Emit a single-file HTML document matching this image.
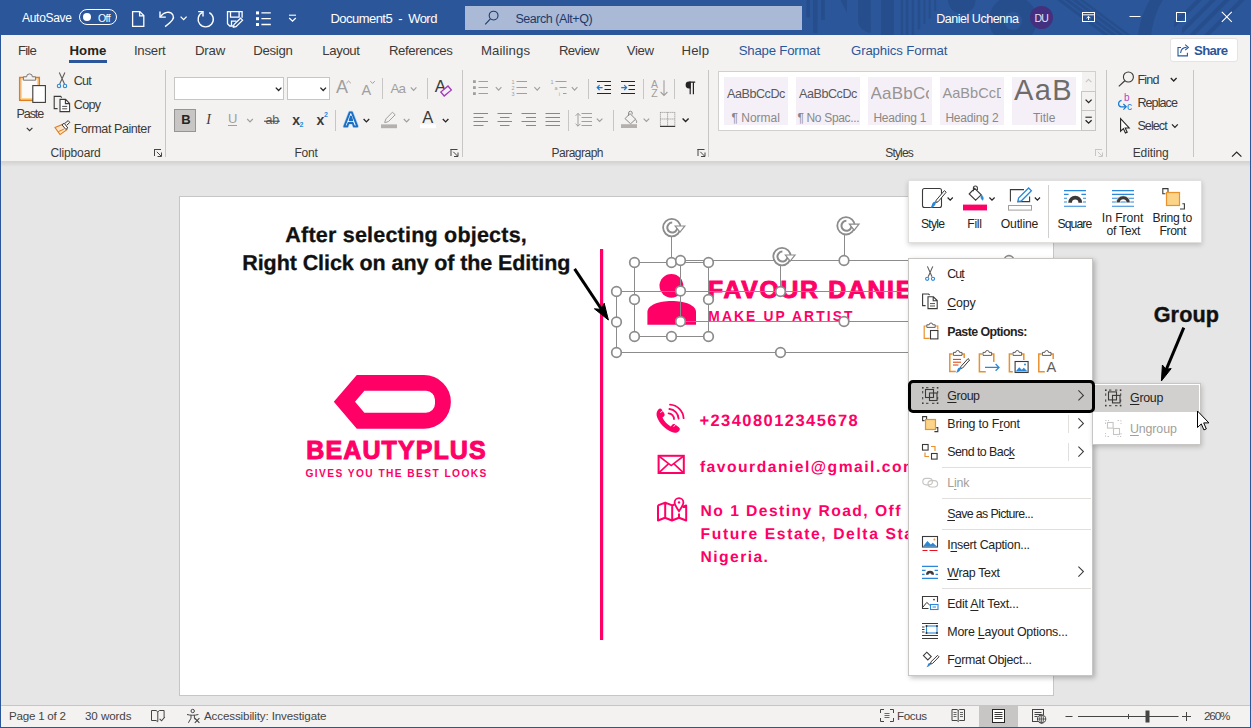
<!DOCTYPE html>
<html><head><meta charset="utf-8"><title>Word</title>
<style>
html,body{margin:0;padding:0;}
body{width:1251px;height:728px;overflow:hidden;position:relative;background:#e6e6e6;font-family:"Liberation Sans",sans-serif;}
.a{position:absolute;}
.t{position:absolute;white-space:nowrap;line-height:24px;height:24px;}
svg{position:absolute;left:0;top:0;overflow:visible;}
.sep{position:absolute;width:1px;background:#c8c6c4;}
.msep{position:absolute;height:1px;background:#e1dfdd;left:942px;width:149px;}
</style></head><body>

<div class="a" id="titlebar" style="left:0;top:0;width:1251px;height:35px;background:#2b579a;"></div>
<svg width="1251" height="35" viewBox="0 0 1251 35">
 <g fill="#264e8c">
  <rect x="806.400" y="0" width="3.600" height="17.500"/><rect x="813" y="0" width="4.600" height="33"/><rect x="821" y="0" width="3.800" height="20"/>
  <path d="M840.400 0 h6.500 v13z"/>
  <path d="M858 0 h12.800 v33 c-7 -1 -12.800 -6 -12.800 -12z"/>
  <rect x="881" y="0" width="12.800" height="35"/>
  <rect x="900.700" y="0" width="2.400" height="35"/><rect x="905.700" y="0" width="2.800" height="35"/><rect x="911.600" y="0" width="2.500" height="35"/>
  <rect x="917.600" y="0" width="2.800" height="29.500"/><rect x="923.500" y="0" width="2" height="24"/><rect x="928.700" y="0" width="2" height="18.500"/><rect x="934.200" y="0" width="2" height="11"/>
  <path d="M948 0 h27.600 a13.800 13.800 0 0 1 -27.600 0z"/>
  <path fill-rule="evenodd" d="M989 20 a24 24 0 1 0 48 0 a24 24 0 1 0 -48 0z M1004 21 a9 9 0 1 0 18 0 a9 9 0 1 0 -18 0z"/>
  <path d="M1057 0 h5 l47 35 h-5z M1064.500 0 h5 l47 35 h-5z M1072 0 h5 l47 35 h-5z M1079.500 0 h4 l47 35 h-4z"/>
  <path d="M1138 35 c2 -14 6 -26 12 -35 h13 c-6 9 -10 21 -12 35z"/>
  <path d="M1174 22 l22 -22 h6 l-28 28z M1182 28 l28 -28 h6 l-34 34z M1190 34 l34 -34 h6 l-35 35 h-5z M1204 35 l35 -35 h6 l-35 35z"/>
 </g>
</svg>
<div class="a" style="left:465px;top:6px;width:337px;height:24px;background:#a9b9d6;"></div>
<span class="t" style="left:22px;top:6.2px;font-size:12px;color:#fff;letter-spacing:-0.292px;">AutoSave</span>
<div class="a" style="left:79px;top:9px;width:36px;height:14px;border:1px solid #fff;border-radius:8px;"></div>
<div class="a" style="left:83px;top:13px;width:8px;height:8px;border-radius:4px;background:#fff;"></div>
<span class="t" style="left:98px;top:5.9px;font-size:10.5px;color:#fff;letter-spacing:-0.556px;">Off</span><span class="t" style="left:330.5px;top:6.6px;font-size:13px;color:#fff;letter-spacing:-0.541px;">Document5&nbsp; -&nbsp; Word</span><span class="t" style="left:515.4px;top:6.5px;font-size:12.5px;color:#1e3a6b;letter-spacing:-0.447px;">Search (Alt+Q)</span><span class="t" style="left:936.3px;top:6.5px;font-size:12.5px;color:#fff;letter-spacing:-0.481px;">Daniel Uchenna</span>
<div class="a" style="left:1030px;top:6px;width:23px;height:23px;border-radius:12px;background:#44307e;"></div>
<span class="t" style="left:1034.5px;top:6.3px;font-size:10.5px;color:#e8e2f4;letter-spacing:-0.872px;">DU</span>
<svg width="1251" height="35" viewBox="0 0 1251 35" fill="none" stroke="#fff" stroke-width="1.3" stroke-linecap="butt">
 <!-- new doc -->
 <path d="M132.6 11.6 h7.2 l4 4 v10.8 h-11.2z M139.6 11.8 v4 h4"/>
 <!-- undo -->
 <path d="M160 11.5 v5.6 h5.8" stroke-width="1.400"/><path d="M160.3 16.8 c3.5 -5 10 -6.2 12.6 -1.8 c1.8 3.2 -0.5 5.8 -7.8 11.6" stroke-width="1.400"/>
 <path d="M180.6 16.6 l3 3 l3 -3" stroke-width="1.3"/>
 <!-- redo -->
 <path d="M202.5 12.4 a7.6 7.6 0 1 0 6.8 0.2" stroke-width="1.400"/><path d="M198.2 11.6 h4.8 v4.8" stroke-width="1.400"/>
 <!-- save/pen -->
 <path d="M236 26 h-6.2 l-2.3 -2.3 v-12 h14.6 v6"/><path d="M230.5 11.8 v5.4 h8.6 v-5.4"/><path d="M231.5 25.8 v-4.6 h5"/>
 <path d="M240.6 18.2 l2 2 l-6.6 6.4 l-2.6 0.6 l0.6 -2.6z" stroke-width="1.200" fill="#2b579a"/>
 <!-- bullets -->
 <g stroke="none" fill="#fff"><rect x="256" y="11.4" width="3" height="3"/><rect x="256" y="17.2" width="3" height="3"/><rect x="256" y="23" width="3" height="3"/></g>
 <path d="M261.4 12.9 h9.4 M261.4 18.7 h9.4 M261.4 24.5 h9.4" stroke-width="1.300"/>
 <!-- customise qat -->
 <path d="M289 15.2 h7" stroke-width="1.1"/><path d="M289.2 18 l3.3 3.2 l3.3 -3.2" stroke-width="1.3"/>
 <!-- ribbon display -->
 <rect x="1082.5" y="12.5" width="12" height="9" stroke-width="1"/><path d="M1082.5 14.8 h12 M1088.5 20 v-3.6 M1086.6 18.2 l1.9 -1.9 l1.9 1.9" stroke-width="1"/>
 <!-- min max close -->
 <path d="M1129.5 16.5 h11" stroke-width="1"/>
 <rect x="1176.5" y="12.5" width="9" height="9" stroke-width="1"/>
 <path d="M1221.8 11.8 l10 10 M1231.8 11.8 l-10 10" stroke-width="1.1"/>
</svg>
<svg width="1251" height="35" viewBox="0 0 1251 35" fill="none" stroke="#1e3a6b" stroke-width="1.1">
 <circle cx="493.6" cy="15.6" r="4.4"/><path d="M490.4 18.9 l-5.2 5.4"/>
</svg>

<div class="a" style="left:0;top:35px;width:1251px;height:126px;background:#f3f2f1;"></div>
<span class="t" style="left:18px;top:39.1px;font-size:13.2px;color:#3b3a39;letter-spacing:-0.817px;">File</span><span class="t" style="left:69.5px;top:39.1px;font-size:13.2px;color:#252423;font-weight:700;letter-spacing:0.053px;">Home</span>
<div class="a" style="left:69px;top:60px;width:38px;height:3px;background:#2b579a;"></div>
<span class="t" style="left:133.9px;top:39.1px;font-size:13.2px;color:#3b3a39;letter-spacing:-0.217px;">Insert</span><span class="t" style="left:194.9px;top:39.1px;font-size:13.2px;color:#3b3a39;letter-spacing:-0.127px;">Draw</span><span class="t" style="left:253.3px;top:39.1px;font-size:13.2px;color:#3b3a39;letter-spacing:-0.312px;">Design</span><span class="t" style="left:322.3px;top:39.1px;font-size:13.2px;color:#3b3a39;letter-spacing:-0.382px;">Layout</span><span class="t" style="left:389px;top:39.1px;font-size:13.2px;color:#3b3a39;letter-spacing:-0.406px;">References</span><span class="t" style="left:481px;top:39.1px;font-size:13.2px;color:#3b3a39;letter-spacing:0.089px;">Mailings</span><span class="t" style="left:558.9px;top:39.1px;font-size:13.2px;color:#3b3a39;letter-spacing:-0.570px;">Review</span><span class="t" style="left:626.7px;top:39.1px;font-size:13.2px;color:#3b3a39;letter-spacing:-0.353px;">View</span><span class="t" style="left:681.5px;top:39.1px;font-size:13.2px;color:#3b3a39;letter-spacing:0.125px;">Help</span><span class="t" style="left:738.7px;top:39.1px;font-size:13.2px;color:#2b579a;letter-spacing:-0.188px;">Shape Format</span><span class="t" style="left:851px;top:39.1px;font-size:13.2px;color:#2b579a;letter-spacing:-0.122px;">Graphics Format</span>
<div class="a" style="left:1170px;top:38px;width:68px;height:24px;background:#fff;border:1px solid #e6e4e2;border-radius:3px;box-sizing:border-box;"></div>
<span class="t" style="left:1194px;top:39px;font-size:13.2px;color:#2b579a;font-weight:700;letter-spacing:-0.664px;">Share</span>
<svg width="1251" height="70" viewBox="0 0 1251 70" fill="none" stroke="#2b579a" stroke-width="1.1">
 <path d="M1181 47.5 h-3 v8.4 h9.4 v-3.2"/><path d="M1180.6 53 c0.4 -3.6 2.6 -5.6 6 -5.6 M1185.2 44.6 l3.2 2.8 l-3.2 2.8"/>
</svg>

<div class="sep" style="left:165px;top:70px;height:87px;"></div>
<div class="sep" style="left:462px;top:70px;height:87px;"></div>
<div class="sep" style="left:708px;top:70px;height:87px;"></div>
<div class="sep" style="left:1106px;top:70px;height:87px;"></div>
<div class="sep" style="left:1193px;top:70px;height:87px;"></div>
<span class="t" style="left:16.5px;top:102.4px;font-size:12.6px;color:#3b3a39;letter-spacing:-1.130px;">Paste</span><span class="t" style="left:73.8px;top:69.3px;font-size:12.6px;color:#3b3a39;letter-spacing:-0.805px;">Cut</span><span class="t" style="left:73.8px;top:93.1px;font-size:12.6px;color:#3b3a39;letter-spacing:-0.735px;">Copy</span><span class="t" style="left:73.8px;top:117.1px;font-size:12.6px;color:#3b3a39;letter-spacing:-0.461px;">Format Painter</span><span class="t" style="left:50.5px;top:141.4px;font-size:12px;color:#3b3a39;letter-spacing:-0.147px;">Clipboard</span>
<svg width="1251" height="165" viewBox="0 0 1251 165" fill="none">
 <!-- paste -->
 <rect x="19.800" y="77.600" width="19.400" height="22.600" fill="#fbfaf9" stroke="#e27d1e" stroke-width="1.700"/><rect x="21.400" y="79.200" width="16.200" height="19.400" fill="none" stroke="#fcd88f" stroke-width="1.300"/>
 <path d="M23.4 80.2 v-3.4 h3.2 a2.9 2.9 0 0 1 5.8 0 h3.2 v3.4z" fill="#f3f2f1" stroke="#797775" stroke-width="1"/>
 <rect x="32.8" y="85.6" width="12.6" height="16.8" fill="#fff" stroke="#3b3a39" stroke-width="1.1"/>
 <path d="M26.8 127.8 l2.8 2.9 l2.8 -2.9" stroke="#3b3a39" stroke-width="1.2" fill="none"/>
 <!-- cut -->
 <path d="M59.3 72.6 l5.2 11.4 M64.9 72.6 l-5.2 11.4" stroke="#605e5c" stroke-width="1.1"/>
 <circle cx="59" cy="86" r="1.7" stroke="#2b88d8" stroke-width="1.1"/><circle cx="65" cy="86" r="1.7" stroke="#2b88d8" stroke-width="1.1"/>
 <!-- copy -->
 <path d="M57.6 108.6 h-3.4 v-12.2 h6.4 l1.2 1.2" stroke="#3b3a39" stroke-width="1.1"/>
 <path d="M60 99.4 h5.6 l4 4 v8.2 h-9.6z M65.4 99.6 v4 h4" stroke="#3b3a39" stroke-width="1.1" fill="#fff"/>
 <path d="M62.2 106.4 h5 M62.2 108.8 h5" stroke="#3b3a39" stroke-width="0.9"/>
 <!-- format painter -->
 <path d="M55 127.6 l8.6 -3.6 l3.4 5.6 l-7 5z" fill="#fbe3c5" stroke="#e07a1c" stroke-width="1.1"/>
 <path d="M58.4 131.6 l5.4 -2.4" stroke="#e07a1c" stroke-width="1"/>
 <path d="M62 124.8 l2.2 -1.6 l3.6 4.8 l-2 1.4z" fill="#fff" stroke="#3b3a39" stroke-width="1"/>
 <path d="M65 123.2 l3.2 -2.6 l1.6 1.8 l-3 2.8" stroke="#3b3a39" stroke-width="1"/>
 <path d="M161.5 156.5 m0 -4 v4 h-4" stroke="#484644" stroke-width="1" fill="none" transform="scale(1,1)"/><path d="M154 149.5 h7 M154.5 149 v7" stroke="#484644" stroke-width="1" fill="none"/><path d="M156.8 151.8 l4.2 4.2" stroke="#484644" stroke-width="1" fill="none"/><path d="M458 156.5 m0 -4 v4 h-4" stroke="#484644" stroke-width="1" fill="none" transform="scale(1,1)"/><path d="M450.5 149.5 h7 M451 149 v7" stroke="#484644" stroke-width="1" fill="none"/><path d="M453.3 151.8 l4.2 4.2" stroke="#484644" stroke-width="1" fill="none"/><path d="M705 156.5 m0 -4 v4 h-4" stroke="#484644" stroke-width="1" fill="none" transform="scale(1,1)"/><path d="M697.5 149.5 h7 M698 149 v7" stroke="#484644" stroke-width="1" fill="none"/><path d="M700.3 151.8 l4.2 4.2" stroke="#484644" stroke-width="1" fill="none"/><path d="M1102.5 156.5 m0 -4 v4 h-4" stroke="#c8c6c4" stroke-width="1" fill="none" transform="scale(1,1)"/><path d="M1095 149.5 h7 M1095.5 149 v7" stroke="#c8c6c4" stroke-width="1" fill="none"/><path d="M1097.8 151.8 l4.2 4.2" stroke="#c8c6c4" stroke-width="1" fill="none"/>
</svg>

<div class="a" style="left:174px;top:77px;width:110px;height:23px;background:#fff;border:1px solid #c8c6c4;box-sizing:border-box;"></div>
<div class="a" style="left:287px;top:77px;width:43px;height:23px;background:#fff;border:1px solid #c8c6c4;box-sizing:border-box;"></div>
<div class="a" style="left:174px;top:109px;width:22px;height:23px;background:#c8c6c4;border:1px solid #979593;box-sizing:border-box;"></div>
<div class="sep" style="left:382px;top:78px;height:21px;"></div>
<div class="sep" style="left:427px;top:78px;height:21px;"></div>
<div class="sep" style="left:335px;top:110px;height:21px;"></div>
<span class="t" style="left:181.3px;top:108.3px;font-size:13px;color:#252423;font-weight:700;">B</span><span class="t" style="left:206.2px;top:108.3px;font-size:14px;color:#3b3a39;font-family:'Liberation Serif',serif;font-style:italic;">I</span><span class="t" style="left:228px;top:107.3px;font-size:13px;color:#a19f9d;">U</span><span class="t" style="left:265.4px;top:108.3px;font-size:12.5px;color:#605e5c;">ab</span><span class="t" style="left:292.2px;top:107.8px;font-size:14px;color:#3b3a39;font-weight:700;">x</span><span class="t" style="left:316.6px;top:107.8px;font-size:14px;color:#3b3a39;font-weight:700;">x</span><span class="t" style="left:299.6px;top:113.3px;font-size:7px;color:#2b88d8;font-weight:700;">2</span><span class="t" style="left:324px;top:102.6px;font-size:7px;color:#2b88d8;font-weight:700;">2</span><span class="t" style="left:336px;top:74.8px;font-size:18px;color:#a19f9d;">A</span><span class="t" style="left:361.6px;top:77.6px;font-size:14.5px;color:#a19f9d;">A</span><span class="t" style="left:390.4px;top:76.6px;font-size:13.4px;color:#a19f9d;letter-spacing:-0.791px;">Aa</span><span class="t" style="left:434.8px;top:75px;font-size:17px;color:#3b3a39;">A</span><span class="t" style="left:422.2px;top:105.4px;font-size:16.5px;color:#3b3a39;">A</span><span class="t" style="left:294.5px;top:141.4px;font-size:12px;color:#3b3a39;letter-spacing:-0.239px;">Font</span>
<svg width="1251" height="165" viewBox="0 0 1251 165" fill="none">
 <path d="M275.8 87.6 l2.8 2.9 l2.8 -2.9" stroke="#252423" stroke-width="1.3" fill="none"/><path d="M320.4 87.6 l2.8 2.9 l2.8 -2.9" stroke="#252423" stroke-width="1.3" fill="none"/>
 <path d="M346.400 83.200 l2.200 -2.200 l2.200 2.200" stroke="#a19f9d" stroke-width="1"/>
 <path d="M370.400 81.200 l2.200 2.200 l2.200 -2.200" stroke="#a19f9d" stroke-width="1"/>
 <path d="M410.8 87.4 l2.8 2.9 l2.8 -2.9" stroke="#a19f9d" stroke-width="1.2" fill="none"/>
 <rect x="441.400" y="88.400" width="9.400" height="5.200" transform="rotate(-40 446.100 91)" stroke="#a33bb5" stroke-width="1.300" fill="#f7eefa"/>
 <path d="M228 125.500 h9" stroke="#a19f9d" stroke-width="1"/>
 <path d="M247.2 119 l2.8 2.9 l2.8 -2.9" stroke="#a19f9d" stroke-width="1.2" fill="none"/>
 <path d="M264 121.2 h15.8" stroke="#3b3a39" stroke-width="1"/>
 <!-- text effects A -->
 <path d="M344.4 126.4 l5.4 -14 h2 l5.4 14 h-3.2 l-1.2 -3.4 h-4.4 l-1.2 3.4z" stroke="#a6cff2" stroke-width="3.200" fill="none" stroke-linejoin="round"/><path d="M344.4 126.4 l5.4 -14 h2 l5.4 14 h-3.2 l-1.2 -3.4 h-4.4 l-1.2 3.4z M349.6 120.4 h2.6 l-1.3 -4z" stroke="#1b6ec2" stroke-width="1.9" fill="#fff" fill-rule="evenodd" stroke-linejoin="round"/>
 <path d="M363.6 119 l2.8 2.9 l2.8 -2.9" stroke="#252423" stroke-width="1.3" fill="none"/>
 <!-- highlighter -->
 <path d="M384.6 122.4 l1.4 -3.6 l6.4 -6.6 l2.8 2.6 l-6.6 6.6 l-2.6 1z" stroke="#a19f9d" stroke-width="1"/>
 <rect x="381" y="124.4" width="16" height="3.8" fill="#b3b0ad"/>
 <path d="M403.8 119 l2.8 2.9 l2.8 -2.9" stroke="#a19f9d" stroke-width="1.2" fill="none"/>
 <rect x="420" y="124.4" width="16" height="3.8" fill="#fff"/>
 <path d="M442.8 119 l2.8 2.9 l2.8 -2.9" stroke="#252423" stroke-width="1.3" fill="none"/>
</svg>

<div class="sep" style="left:588px;top:79px;height:20px;"></div>
<div class="sep" style="left:643px;top:79px;height:20px;"></div>
<div class="sep" style="left:674px;top:79px;height:20px;"></div>
<div class="sep" style="left:568px;top:110px;height:21px;"></div>
<div class="sep" style="left:613px;top:110px;height:21px;"></div>
<span class="t" style="left:551.5px;top:141.4px;font-size:12px;color:#3b3a39;letter-spacing:-0.506px;">Paragraph</span><span class="t" style="left:511.4px;top:69.6px;font-size:5.5px;color:#a19f9d;">1</span><span class="t" style="left:511.4px;top:75.6px;font-size:5.5px;color:#a19f9d;">2</span><span class="t" style="left:511.4px;top:81.6px;font-size:5.5px;color:#a19f9d;">3</span><span class="t" style="left:550.6px;top:69.6px;font-size:5.5px;color:#a19f9d;">1</span><span class="t" style="left:554.6px;top:75.6px;font-size:5.5px;color:#a19f9d;">a</span><span class="t" style="left:558.8px;top:81.6px;font-size:5.5px;color:#a19f9d;">i</span><span class="t" style="left:651px;top:71.8px;font-size:10.5px;color:#a19f9d;">A</span><span class="t" style="left:651.2px;top:80.6px;font-size:10.5px;color:#a19f9d;">Z</span>
<svg width="1251" height="165" viewBox="0 0 1251 165" fill="none">
 <!-- bullets -->
 <g fill="#a19f9d"><rect x="473" y="80.2" width="2.8" height="2.8"/><rect x="473" y="86.2" width="2.8" height="2.8"/><rect x="473" y="92.2" width="2.8" height="2.8"/></g>
 <path d="M478.5 81.5 h9.5 M478.5 87.5 h9.5 M478.5 93.5 h9.5 " stroke="#a19f9d" stroke-width="1" fill="none"/><path d="M495.8 87.2 l2.8 2.9 l2.8 -2.9" stroke="#a19f9d" stroke-width="1.1" fill="none"/><path d="M516.5 81.5 h10.5 M516.5 87.5 h10.5 M516.5 93.5 h10.5 " stroke="#a19f9d" stroke-width="1" fill="none"/><path d="M534.4 87.2 l2.8 2.9 l2.8 -2.9" stroke="#a19f9d" stroke-width="1.1" fill="none"/><path d="M555.5 81.5 h11 M559.5 87.5 h7 M563 93.5 h3.5" stroke="#a19f9d" stroke-width="1"/><path d="M571.8 87.2 l2.8 2.9 l2.8 -2.9" stroke="#a19f9d" stroke-width="1.1" fill="none"/>
 <!-- indents -->
 <path d="M597 81.500 h14 M604.500 85.500 h6.500 M604.500 89.500 h6.500 M597 93.500 h14" stroke="#252423" stroke-width="1"/>
 <path d="M602.6 87.6 h-5.4 M599.6 85.2 l-2.4 2.4 l2.4 2.4" stroke="#1b7ad1" stroke-width="1.2"/>
 <path d="M621 81.500 h14 M628.500 85.500 h6.500 M628.500 89.500 h6.500 M621 93.500 h14" stroke="#252423" stroke-width="1"/>
 <path d="M621.2 87.6 h5.4 M624.2 85.2 l2.4 2.4 l-2.4 2.4" stroke="#1b7ad1" stroke-width="1.2"/>
 <!-- sort -->
 <path d="M664 80.2 v15 M660.6 92 l3.4 3.4 l3.4 -3.4" stroke="#a19f9d" stroke-width="1.1"/>
 <!-- pilcrow -->
 <path d="M690.2 81.8 v12.4 M693.4 81.8 v12.4 M695.2 82.2 h-5.8" stroke="#252423" stroke-width="1.2"/>
 <path d="M690.6 81.6 h-1.6 a3.4 3.4 0 0 0 0 6.8 h1.6z" fill="#252423"/>
 <!-- aligns -->
 <path d="M473.5 113.5 h14.5 M473.5 117.5 h10 M473.5 121.5 h14.5 M473.5 125.5 h10 " stroke="#8a8886" stroke-width="1" fill="none"/><path d="M497.5 113.5 h14.5 M500 117.5 h9.5 M497.5 121.5 h14.5 M500 125.5 h9.5 " stroke="#8a8886" stroke-width="1" fill="none"/><path d="M521.5 113.5 h14.5 M526 117.5 h10 M521.5 121.5 h14.5 M526 125.5 h10 " stroke="#8a8886" stroke-width="1" fill="none"/><path d="M545.5 113.5 h14.5 M545.5 117.5 h14.5 M545.5 121.5 h14.5 M545.5 125.5 h14.5 " stroke="#8a8886" stroke-width="1" fill="none"/>
 <!-- line spacing -->
 <path d="M581.5 113.5 h10.5 M581.5 117.5 h10.5 M581.5 121.5 h10.5 M581.5 125.5 h10.5 " stroke="#a19f9d" stroke-width="1" fill="none"/>
 <path d="M578 113.4 v12.8 M575.6 115.8 l2.4 -2.4 l2.4 2.4 M575.6 123.8 l2.4 2.4 l2.4 -2.4" stroke="#a19f9d" stroke-width="1"/>
 <path d="M596.8 118.6 l2.8 2.9 l2.8 -2.9" stroke="#a19f9d" stroke-width="1.2" fill="none"/>
 <!-- shading -->
 <path d="M625 118.6 l5 -5 l5.6 5.6 l-5 4.6z M628.6 116 v-3 a1.8 1.8 0 0 1 3.6 0 v1.4 M635.4 119.4 c1.4 1.6 1.6 2.8 0.8 3.6" stroke="#8a8886" stroke-width="1"/>
 <rect x="621" y="124.2" width="16" height="3.8" fill="#b3b0ad"/>
 <path d="M643.6 118.6 l2.8 2.9 l2.8 -2.9" stroke="#a19f9d" stroke-width="1.2" fill="none"/>
 <!-- borders -->
 <path d="M660.4 112.4 h14.4 M660.4 112.4 v13 M674.8 112.4 v13 M667.6 112.4 v13 M660.4 119 h14.4" stroke="#8a8886" stroke-width="1" stroke-dasharray="1 1"/>
 <path d="M660 126.4 h15.2" stroke="#3b3a39" stroke-width="1.2"/>
 <path d="M682.6 118.4 l3 3 l3 -3" stroke="#252423" stroke-width="1.4" fill="none"/>
</svg>

<div class="a" style="left:718px;top:71px;width:378px;height:60px;background:#fff;border:1px solid #d2d0ce;box-sizing:border-box;"></div>
<div class="a" style="left:724px;top:77px;width:64px;height:48px;background:#f5f0f7;"></div><div class="a" style="left:796px;top:77px;width:64px;height:48px;background:#f5f0f7;"></div><div class="a" style="left:868px;top:77px;width:64px;height:48px;background:#f5f0f7;"></div><div class="a" style="left:940px;top:77px;width:64px;height:48px;background:#f5f0f7;"></div><div class="a" style="left:1012px;top:77px;width:64px;height:48px;background:#f5f0f7;"></div>
<div class="a" style="left:1081px;top:91px;width:15px;height:20px;border:1px solid #c8c6c4;box-sizing:border-box;background:#f3f2f1;"></div>
<div class="a" style="left:1081px;top:110px;width:15px;height:21px;border:1px solid #c8c6c4;box-sizing:border-box;background:#f3f2f1;"></div>
<div class="a" style="left:1082px;top:72px;width:13px;height:19px;background:#f3f2f1;"></div>
<span class="t" style="left:727px;top:81.6px;font-size:12.6px;color:#5a5a5a;letter-spacing:-0.456px;">AaBbCcDc</span><span class="t" style="left:799px;top:81.6px;font-size:12.6px;color:#5a5a5a;letter-spacing:-0.456px;">AaBbCcDc</span><span class="t" style="left:870.6px;top:81.6px;font-size:17px;color:#979593;font-weight:400;letter-spacing:0.180px;overflow:hidden;width:58.5px;">AaBbCc</span><span class="t" style="left:942.4px;top:81px;font-size:14.6px;color:#979593;font-weight:400;letter-spacing:0.017px;overflow:hidden;width:59px;">AaBbCcD</span><span class="t" style="left:1014px;top:77.7px;font-size:29px;color:#6e6c6a;font-weight:400;letter-spacing:1.336px;">AaB</span><span class="t" style="left:731.5px;top:105.6px;font-size:12px;color:#8a8886;">&para; Normal</span><span class="t" style="left:797.4px;top:105.6px;font-size:12px;color:#8a8886;letter-spacing:-0.326px;">&para; No Spac...</span><span class="t" style="left:873.4px;top:105.6px;font-size:12px;color:#8a8886;letter-spacing:-0.215px;">Heading 1</span><span class="t" style="left:945.4px;top:105.6px;font-size:12px;color:#8a8886;letter-spacing:-0.190px;">Heading 2</span><span class="t" style="left:1033px;top:105.6px;font-size:12px;color:#8a8886;letter-spacing:0.041px;">Title</span><span class="t" style="left:885.3px;top:141.4px;font-size:12px;color:#3b3a39;letter-spacing:-0.838px;">Styles</span>
<svg width="1251" height="165" viewBox="0 0 1251 165" fill="none">
 <path d="M1085.8 82.2 l2.8 -2.8 l2.8 2.8" stroke="#c8c6c4" stroke-width="1.1"/>
 <path d="M1085.6 99.6 l3 3 l3 -3" stroke="#252423" stroke-width="1.3"/>
 <path d="M1085.4 117.2 h6.4" stroke="#252423" stroke-width="1.1"/><path d="M1085.6 120.2 l3 3 l3 -3" stroke="#252423" stroke-width="1.3"/>
</svg>
<span class="t" style="left:1137.4px;top:67.9px;font-size:12.6px;color:#3b3a39;letter-spacing:-0.833px;">Find</span><span class="t" style="left:1137.4px;top:91.4px;font-size:12.6px;color:#3b3a39;letter-spacing:-0.936px;">Replace</span><span class="t" style="left:1137.4px;top:114.2px;font-size:12.6px;color:#3b3a39;letter-spacing:-0.943px;">Select</span><span class="t" style="left:1132.7px;top:141.4px;font-size:12px;color:#3b3a39;letter-spacing:-0.101px;">Editing</span><span class="t" style="left:1124px;top:86px;font-size:10px;color:#b146c2;">b</span><span class="t" style="left:1127px;top:94.8px;font-size:10px;color:#1b7ad1;">c</span>
<svg width="1251" height="165" viewBox="0 0 1251 165" fill="none">
 <circle cx="1128.4" cy="77" r="5" stroke="#3b3a39" stroke-width="1.1"/><path d="M1124.8 80.8 l-6 5.6" stroke="#3b3a39" stroke-width="1.2"/>
 <path d="M1170.8 78 l2.9 3 l2.9 -3" stroke="#252423" stroke-width="1.3" fill="none"/>
 <path d="M1121.6 100.4 c-3.6 0.6 -4.2 5.4 -0.6 6.4 h5 M1123.4 104 l2.8 2.8 l-2.8 2.8" stroke="#1b7ad1" stroke-width="1.2"/>
 <path d="M1120.6 118.6 v12.6 l2.8 -2.6 l2 4.4 l1.8 -0.8 l-2 -4.2 h4z" stroke="#252423" stroke-width="1.1" fill="#fff"/>
 <path d="M1172 124.4 l2.9 3 l2.9 -3" stroke="#252423" stroke-width="1.3" fill="none"/>
 <path d="M1232 156.700 l4.700 -4.700 l4.700 4.700" stroke="#252423" stroke-width="1.200"/>
</svg>
<div class="a" style="left:0;top:161px;width:1251px;height:1px;background:#d6d4d2;"></div>
<div class="a" style="left:0;top:162px;width:1251px;height:5px;background:linear-gradient(#d4d4d4,#e6e6e6);"></div>

<div class="a" style="left:179px;top:196px;width:875px;height:499.500px;background:#fff;border:1px solid #c6c6c6;box-sizing:border-box;"></div>
<span class="t" style="left:285.3px;top:223px;font-size:21.5px;color:#111;font-weight:700;letter-spacing:0.214px;-webkit-text-stroke:0.300px #111;text-rendering:geometricPrecision;">After selecting objects,</span><span class="t" style="left:242.3px;top:251px;font-size:21.5px;color:#111;font-weight:700;letter-spacing:-0.086px;-webkit-text-stroke:0.300px #111;text-rendering:geometricPrecision;">Right Click on any of the Editing</span><span class="t" style="left:306.3px;top:437.6px;font-size:25px;color:#ff0066;font-weight:700;letter-spacing:1.103px;-webkit-text-stroke:1px #ff0066;">BEAUTYPLUS</span><span class="t" style="left:305.5px;top:461.8px;font-size:10.2px;color:#ff0066;font-weight:700;letter-spacing:1.421px;">GIVES YOU THE BEST LOOKS</span><span class="t" style="left:708.1px;top:278.1px;font-size:24.7px;color:#ff0066;font-weight:700;letter-spacing:1.759px;-webkit-text-stroke:1px #ff0066;">FAVOUR DANIEL</span><span class="t" style="left:708.3px;top:304.5px;font-size:13.8px;color:#ff0066;font-weight:700;letter-spacing:2.130px;">MAKE UP ARTIST</span><span class="t" style="left:699.4px;top:409px;font-size:16.5px;color:#ff0066;font-weight:700;letter-spacing:1.442px;text-rendering:geometricPrecision;">+23408012345678</span><span class="t" style="left:699.9px;top:456px;font-size:15.7px;color:#ff0066;font-weight:700;letter-spacing:1.473px;text-rendering:geometricPrecision;">favourdaniel@gmail.com</span><span class="t" style="left:700.6px;top:500px;font-size:15.7px;color:#ff0066;font-weight:700;letter-spacing:1.421px;text-rendering:geometricPrecision;">No 1 Destiny Road, Off</span><span class="t" style="left:700.6px;top:523px;font-size:15.7px;color:#ff0066;font-weight:700;letter-spacing:1.577px;text-rendering:geometricPrecision;">Future Estate, Delta State,</span><span class="t" style="left:700.6px;top:546px;font-size:15.7px;color:#ff0066;font-weight:700;letter-spacing:1.393px;text-rendering:geometricPrecision;">Nigeria.</span>
<svg width="1251" height="728" viewBox="0 0 1251 728" fill="none">
 <rect x="600" y="249" width="3.2" height="391" fill="#ff0066"/>
 <!-- logo tag -->
 <path fill="#ff0066" fill-rule="evenodd" d="M333.8 401.8 L356.8 375 H424 A26.9 26.9 0 0 1 424 428.8 H356.8 Z M355 401.8 L364.4 412.7 H426 A9 9 0 0 0 435 403.7 V399.8 A9 9 0 0 0 426 390.8 H364.4 Z"/>
 <!-- person -->
 <circle cx="671.4" cy="285.8" r="11.9" fill="#ff0066"/>
 <path fill="#ff0066" d="M647.4 324.8 V312 C647.4 305.5 658 301 671.6 301 C685.4 301 696 305.5 696 312 V324.8 Z"/>
 <!-- phone -->
 <path fill="#ff0066" d="M658.6 409.2 c-2.2 2.4 -2.6 5.2 -1.4 8.2 c2.2 5.6 7.4 11.2 14.6 14.6 c3.2 1.4 6 0.6 7.6 -1.6 c0.8 -1.2 0.6 -2.4 -0.6 -3.2 l-3.6 -2.6 c-1.2 -0.8 -2.4 -0.6 -3.2 0.4 l-1.2 1.4 c-3.4 -1.8 -6.6 -5 -8.4 -8.8 l1.4 -1.2 c1 -0.8 1.2 -2 0.4 -3.2 l-2.4 -3.6 c-0.8 -1.2 -2.2 -1.4 -3.2 -0.4z"/>
 <path stroke="#ff0066" stroke-width="1.800" d="M668.600 413.400 a5.600 5.600 0 0 1 5.400 5.600 M669.400 409 a10 10 0 0 1 9.200 9.600 M670 404.600 a14.400 14.400 0 0 1 13.600 13.600" stroke-linecap="round"/><path stroke="#fff" stroke-width="1" d="M660.400 412.600 l4.200 -3.400 M673.600 426.800 l3.400 -4"/>
 <!-- envelope -->
 <rect x="658.600" y="455.800" width="25.200" height="17.200" stroke="#ff0066" stroke-width="2"/>
 <path stroke="#ff0066" stroke-width="1.600" d="M658.8 456 l12.4 9.6 l12.4 -9.6 M658.8 472.8 l9.6 -9 M683.6 472.8 l-9.6 -9"/>
 <!-- map -->
 <path stroke="#ff0066" stroke-width="2" stroke-linejoin="round" d="M658 505.400 l7.200 -2.800 l7 2.800 l2.400 -0.900 M682.400 507 l3.800 -1.500 v15 l-7.200 -2.800 l-7 2.800 l-7 -2.800 l-7 2.800 v-15.200 M665.200 502.800 v15.200 M672.200 505.400 v15.200 M679 513.500 v4.600"/>
 <path stroke="#ff0066" stroke-width="1.800" d="M679 511.200 c-3 -4.200 -4.400 -6.400 -4.400 -8.600 a4.400 4.400 0 0 1 8.800 0 c0 2.200 -1.400 4.400 -4.400 8.600z"/><circle cx="679" cy="502.400" r="1.200" fill="#ff0066"/>
 <!-- annotation arrow 1 -->
 <path d="M574.6 268.8 L603 311.5" stroke="#000" stroke-width="3"/>
 <path d="M608.4 320 L594.400 308.800 L601.400 309.400 L604.200 303.200 Z" fill="#000" stroke="#000" stroke-width="1" stroke-linejoin="miter"/>
 <!-- selection boxes -->
 <g stroke="#8c8c8c" stroke-width="1">
  <rect x="634.5" y="262.5" width="74" height="74"/>
  <rect x="680.5" y="260.5" width="328.500" height="61"/>
  <rect x="616.5" y="291.5" width="328" height="61"/>
  <path d="M671.5 236 v26 M844.5 234 v26 M780.5 265 v26"/>
 </g>
 <circle cx="671.8" cy="227.6" r="8.7" fill="#fff" stroke="#8c8c8c" stroke-width="1.8"/><path d="M672.2 222.6 a5 5 0 1 0 4.8 3.4" fill="none" stroke="#8c8c8c" stroke-width="2"/><path d="M675.2 226 h9.6 l-4.8 6z" fill="#fff" stroke="#8c8c8c" stroke-width="1.2"/><circle cx="846" cy="225.8" r="8.7" fill="#fff" stroke="#8c8c8c" stroke-width="1.8"/><path d="M846.4 220.8 a5 5 0 1 0 4.8 3.4" fill="none" stroke="#8c8c8c" stroke-width="2"/><path d="M849.4 224.2 h9.6 l-4.8 6z" fill="#fff" stroke="#8c8c8c" stroke-width="1.2"/><circle cx="782" cy="256.6" r="8.7" fill="#fff" stroke="#8c8c8c" stroke-width="1.8"/><path d="M782.4 251.6 a5 5 0 1 0 4.8 3.4" fill="none" stroke="#8c8c8c" stroke-width="2"/><path d="M785.4 255 h9.6 l-4.8 6z" fill="#fff" stroke="#8c8c8c" stroke-width="1.2"/><circle cx="634.5" cy="262.5" r="4.8" fill="#fff" stroke="#8c8c8c" stroke-width="1.7"/><circle cx="634.5" cy="299.5" r="4.8" fill="#fff" stroke="#8c8c8c" stroke-width="1.7"/><circle cx="634.5" cy="336.5" r="4.8" fill="#fff" stroke="#8c8c8c" stroke-width="1.7"/><circle cx="671.5" cy="262.5" r="4.8" fill="#fff" stroke="#8c8c8c" stroke-width="1.7"/><circle cx="671.5" cy="336.5" r="4.8" fill="#fff" stroke="#8c8c8c" stroke-width="1.7"/><circle cx="708.5" cy="262.5" r="4.8" fill="#fff" stroke="#8c8c8c" stroke-width="1.7"/><circle cx="708.5" cy="299.5" r="4.8" fill="#fff" stroke="#8c8c8c" stroke-width="1.7"/><circle cx="708.5" cy="336.5" r="4.8" fill="#fff" stroke="#8c8c8c" stroke-width="1.7"/><circle cx="680.5" cy="260.5" r="4.8" fill="#fff" stroke="#8c8c8c" stroke-width="1.7"/><circle cx="680.5" cy="291" r="4.8" fill="#fff" stroke="#8c8c8c" stroke-width="1.7"/><circle cx="680.5" cy="321.5" r="4.8" fill="#fff" stroke="#8c8c8c" stroke-width="1.7"/><circle cx="844" cy="260.5" r="4.8" fill="#fff" stroke="#8c8c8c" stroke-width="1.7"/><circle cx="844" cy="321.5" r="4.8" fill="#fff" stroke="#8c8c8c" stroke-width="1.7"/><circle cx="1009" cy="260.5" r="4.8" fill="#fff" stroke="#8c8c8c" stroke-width="1.7"/><circle cx="616.5" cy="291.5" r="4.8" fill="#fff" stroke="#8c8c8c" stroke-width="1.7"/><circle cx="616.5" cy="322" r="4.8" fill="#fff" stroke="#8c8c8c" stroke-width="1.7"/><circle cx="616.5" cy="352.5" r="4.8" fill="#fff" stroke="#8c8c8c" stroke-width="1.7"/><circle cx="780.5" cy="291.5" r="4.8" fill="#fff" stroke="#8c8c8c" stroke-width="1.7"/><circle cx="780.5" cy="352.5" r="4.8" fill="#fff" stroke="#8c8c8c" stroke-width="1.7"/>
</svg>

<!-- mini toolbar -->
<div class="a" style="left:908px;top:180px;width:294px;height:62.5px;background:#fff;border:1px solid #e1dfdd;box-sizing:border-box;box-shadow:0 2px 5px rgba(0,0,0,.18);"></div>
<div class="sep" style="left:1048px;top:185px;height:53px;background:#d2d0ce;"></div>
<span class="t" style="left:921px;top:212.2px;font-size:12.2px;color:#252423;letter-spacing:-0.777px;">Style</span><span class="t" style="left:967.3px;top:212.2px;font-size:12.2px;color:#252423;letter-spacing:-0.293px;">Fill</span><span class="t" style="left:1000.7px;top:212.2px;font-size:12.2px;color:#252423;letter-spacing:-0.154px;">Outline</span><span class="t" style="left:1057.6px;top:212.2px;font-size:12.2px;color:#252423;letter-spacing:-0.942px;">Square</span><span class="t" style="left:1101.8px;top:206.2px;font-size:12.2px;color:#252423;letter-spacing:-0.057px;">In Front</span><span class="t" style="left:1106.5px;top:219.2px;font-size:12.2px;color:#252423;letter-spacing:-0.315px;">of Text</span><span class="t" style="left:1152.6px;top:206.2px;font-size:12.2px;color:#252423;letter-spacing:-0.345px;">Bring to</span><span class="t" style="left:1159.5px;top:219.2px;font-size:12.2px;color:#252423;letter-spacing:-0.388px;">Front</span>
<!-- context menu -->
<div class="a" style="left:908px;top:258px;width:184.500px;height:417.500px;background:#fff;border:1px solid #c8c6c4;box-sizing:border-box;box-shadow:2px 2px 5px rgba(0,0,0,.25);"></div>
<!-- submenu -->
<div class="a" style="left:1091.5px;top:382.5px;width:109.5px;height:62px;background:#fff;border:1px solid #c8c6c4;box-sizing:border-box;box-shadow:1px 2px 5px rgba(0,0,0,.2);"></div>
<div class="a" style="left:1094px;top:384.5px;width:105px;height:27.5px;background:#d2d0ce;"></div>
<div class="a" style="left:908px;top:380px;width:187px;height:32.5px;background:#c8c6c4;border:3px solid #000;border-radius:5px;box-sizing:border-box;"></div>
<div class="msep" style="top:467px;"></div><div class="msep" style="top:498px;"></div><div class="msep" style="top:529px;"></div><div class="msep" style="top:588px;"></div>
<div class="a" style="left:1068px;top:415px;width:1px;height:18px;background:#e1dfdd;"></div>
<div class="a" style="left:1068px;top:443px;width:1px;height:18px;background:#e1dfdd;"></div>
<span class="t" style="left:947.3px;top:262.3px;font-size:12.4px;color:#252423;letter-spacing:-0.998px;">Cu<span style="text-decoration:underline;text-underline-offset:1.5px;text-decoration-thickness:1px;">t</span></span><span class="t" style="left:947.3px;top:290.5px;font-size:12.4px;color:#252423;letter-spacing:-0.212px;"><span style="text-decoration:underline;text-underline-offset:1.5px;text-decoration-thickness:1px;">C</span>opy</span><span class="t" style="left:947.3px;top:320.1px;font-size:12.4px;color:#252423;font-weight:700;letter-spacing:-0.564px;">Paste Options:</span><span class="t" style="left:947.3px;top:384.3px;font-size:12.4px;color:#252423;letter-spacing:-0.438px;"><span style="text-decoration:underline;text-underline-offset:1.5px;text-decoration-thickness:1px;">G</span>roup</span><span class="t" style="left:947.3px;top:412.3px;font-size:12.4px;color:#252423;letter-spacing:-0.184px;">Bring to F<span style="text-decoration:underline;text-underline-offset:1.5px;text-decoration-thickness:1px;">r</span>ont</span><span class="t" style="left:947.3px;top:440px;font-size:12.4px;color:#252423;letter-spacing:-0.547px;">Send to Bac<span style="text-decoration:underline;text-underline-offset:1.5px;text-decoration-thickness:1px;">k</span></span><span class="t" style="left:947.3px;top:471.1px;font-size:12.4px;color:#a19f9d;letter-spacing:-0.222px;">L<span style="text-decoration:underline;text-underline-offset:1.5px;text-decoration-thickness:1px;">i</span>nk</span><span class="t" style="left:947.3px;top:501.8px;font-size:12.4px;color:#252423;letter-spacing:-0.636px;"><span style="text-decoration:underline;text-underline-offset:1.5px;text-decoration-thickness:1px;">S</span>ave as Picture...</span><span class="t" style="left:947.3px;top:532.8px;font-size:12.4px;color:#252423;letter-spacing:-0.300px;">I<span style="text-decoration:underline;text-underline-offset:1.5px;text-decoration-thickness:1px;">n</span>sert Caption...</span><span class="t" style="left:947.3px;top:561.3px;font-size:12.4px;color:#252423;letter-spacing:-0.330px;"><span style="text-decoration:underline;text-underline-offset:1.5px;text-decoration-thickness:1px;">W</span>rap Text</span><span class="t" style="left:947.3px;top:592.1px;font-size:12.4px;color:#252423;letter-spacing:-0.210px;">Edit <span style="text-decoration:underline;text-underline-offset:1.5px;text-decoration-thickness:1px;">A</span>lt Text...</span><span class="t" style="left:947.3px;top:619.8px;font-size:12.4px;color:#252423;letter-spacing:-0.223px;">More <span style="text-decoration:underline;text-underline-offset:1.5px;text-decoration-thickness:1px;">L</span>ayout Options...</span><span class="t" style="left:947.3px;top:648.3px;font-size:12.4px;color:#252423;letter-spacing:-0.277px;">F<span style="text-decoration:underline;text-underline-offset:1.5px;text-decoration-thickness:1px;">o</span>rmat Object...</span><span class="t" style="left:1130px;top:386.3px;font-size:12.4px;color:#252423;letter-spacing:-0.263px;"><span style="text-decoration:underline;text-underline-offset:1.5px;text-decoration-thickness:1px;">G</span>roup</span><span class="t" style="left:1130px;top:417.2px;font-size:12.4px;color:#a19f9d;letter-spacing:-0.124px;"><span style="text-decoration:underline;text-underline-offset:1.5px;text-decoration-thickness:1px;">U</span>ngroup</span><span class="t" style="left:1153.7px;top:302.8px;font-size:21.6px;color:#111;font-weight:700;letter-spacing:0.130px;-webkit-text-stroke:0.400px #111;">Group</span><span class="t" style="left:1046.4px;top:355px;font-size:14.5px;color:#605e5c;">A</span>
<svg width="1251" height="728" viewBox="0 0 1251 728" fill="none">
 <path d="M1078.4 390.4 l5 5 l-5 5" stroke="#3b3a39" stroke-width="1.1" fill="none"/><path d="M1078.4 418.4 l5 5 l-5 5" stroke="#3b3a39" stroke-width="1.1" fill="none"/><path d="M1078.4 446.6 l5 5 l-5 5" stroke="#3b3a39" stroke-width="1.1" fill="none"/><path d="M1078.4 566.6 l5 5 l-5 5" stroke="#3b3a39" stroke-width="1.1" fill="none"/>
 <!-- mini toolbar icons -->
 <rect x="922.5" y="188.5" width="19" height="19" rx="2" stroke="#3b3a39" stroke-width="1.1" fill="#fff"/>
 <path d="M944.4 190.6 l1.8 1.6 l-8.2 9.6 l-2.4 0.8 l0.6 -2.4z" fill="#fff" stroke="#3b3a39" stroke-width="1"/>
 <path d="M936 202.2 c-0.4 3.4 -2.6 5.4 -6 5.8 c2 -1.4 1.6 -3.6 2.6 -5 c1 -1.4 2.6 -1.6 3.4 -0.8z" fill="#2b88d8"/>
 <path d="M947.6 197.500 l2.6 2.6 l2.6 -2.6" stroke="#252423" stroke-width="1.2"/>
 <rect x="963" y="204.6" width="24" height="5.8" fill="#ff0066"/>
 <path d="M969.2 194 l5.4 -5.6 l6.6 6.4 l-5.6 5.4z M973.4 191.2 v-3.2 a2 2 0 0 1 4 0 v2" stroke="#3b3a39" stroke-width="1.1" fill="#fff"/>
 <path d="M981.4 194.8 c1.8 2 2.4 3.8 1.2 5.4 c-1.6 -1 -2 -3 -1.2 -5.4z" fill="#2b88d8" stroke="#2b88d8" stroke-width=".8"/>
 <path d="M989.4 197.500 l2.6 2.6 l2.6 -2.6" stroke="#252423" stroke-width="1.2"/>
 <rect x="1008.5" y="205.5" width="23" height="4.6" stroke="#a19f9d" stroke-width="1" fill="#fff"/>
 <path d="M1010.4 201.6 v-12 h13.6 M1029.6 196.4 v5.2 h-12" stroke="#3b3a39" stroke-width="1.1"/>
 <path d="M1028.6 188 l2.8 2.8 l-10 10 l-3.6 0.8 l0.8 -3.6z" stroke="#2b88d8" stroke-width="1.3" fill="#fff"/>
 <path d="M1034.8 197.500 l2.6 2.6 l2.6 -2.6" stroke="#252423" stroke-width="1.2"/>
 <!-- square wrap -->
 <path d="M1064 190.6 h22 M1064 194.4 h4.6 M1081.4 194.4 h4.6 M1064 198.2 h3 M1083 198.2 h3 M1064 202 h3 M1083 202 h3 M1064 206.2 h22" stroke="#2b88d8" stroke-width="1.1"/>
 <path d="M1068.200 202.800 a7 7 0 0 1 14 0 h-3.800 a3.200 3.200 0 0 0 -6.400 0z" fill="#3b3a39"/>
 <!-- in front -->
 <path d="M1112 190.6 h22 M1112 194.4 h22 M1112 198.2 h22 M1112 202 h22 M1112 206.2 h22" stroke="#2b88d8" stroke-width="1.1"/>
 <path d="M1116.200 202.800 a7 7 0 0 1 14 0 h-3.800 a3.200 3.200 0 0 0 -6.400 0z" fill="#3b3a39" stroke="#fff" stroke-width=".6"/>
 <!-- bring to front -->
 <path d="M1168 193 v-4.4 h-5.2 v5.2 h2.6 M1180 209 h4.4 v-5.2 h-2" stroke="#3b3a39" stroke-width="1.1"/>
 <rect x="1166.500" y="192.500" width="13" height="13" fill="#fbd48a" stroke="#e8912d" stroke-width="1.200"/>
 <!-- menu icons -->
 <path d="M927.4 266.4 l4.6 10.4 M932.8 266.4 l-4.6 10.4" stroke="#605e5c" stroke-width="1.1"/>
 <circle cx="927.2" cy="278.8" r="1.6" stroke="#2b88d8" stroke-width="1.1"/><circle cx="933" cy="278.8" r="1.6" stroke="#2b88d8" stroke-width="1.1"/>
 <path d="M925.6 305.6 h-3 v-11.6 h6 l1 1" stroke="#3b3a39" stroke-width="1.1"/>
 <path d="M928 296.8 h5.4 l3.8 3.8 v8 h-9.2z M933.2 297 v3.8 h3.8" stroke="#3b3a39" stroke-width="1.1" fill="#fff"/><path d="M930 303.6 h5 M930 306 h5" stroke="#3b3a39" stroke-width=".9"/>
 <path d="M926.4 326 h-2.2 v12.4 h5.4 M935.6 326 h2.2 v3.4" stroke="#e8912d" stroke-width="1.2"/>
 <path d="M926.8 327.4 v-2.6 h2.4 a1.8 1.8 0 0 1 3.6 0 h2.4 v2.6z" stroke="#605e5c" stroke-width="1" fill="#fff"/>
 <rect x="930.5" y="330.5" width="7.4" height="8.4" stroke="#3b3a39" stroke-width="1.1" fill="#fff"/>
 <!-- paste option icons -->
 <g id="pb">
 <path d="M952.600 354 h-2.800 v17.400 h6 M961.400 354 h2.800 v4" stroke="#e8912d" stroke-width="1.500"/>
 <path d="M953.4 355.4 v-3 h2.4 a1.9 1.9 0 0 1 3.8 0 h2.4 v3z" stroke="#605e5c" stroke-width="1" fill="#fff"/>
 </g>
 <path d="M953 359.4 h8 M953 362.2 h8 M953 365 h5.4" stroke="#d83b01" stroke-width="1"/>
 <path d="M968 358.6 l1.6 1.4 l-7 8 l-2.2 0.6 l0.6 -2.2z" fill="#fff" stroke="#3b3a39" stroke-width="1"/>
 <path d="M961 368 c-0.4 2.8 -2.2 4.4 -5.2 4.8 c1.6 -1.2 1.4 -3 2.2 -4.2 c0.8 -1.2 2.4 -1.4 3 -0.6z" fill="#2b88d8"/>
 <g transform="translate(29.6 0)"><path d="M952.600 354 h-2.800 v17.800 h6.400 M961.400 354 h2.800 v8" stroke="#e8912d" stroke-width="1.500"/>
 <path d="M953.4 355.4 v-3 h2.4 a1.9 1.9 0 0 1 3.8 0 h2.4 v3z" stroke="#605e5c" stroke-width="1" fill="#fff"/>
 <path d="M955.400 367.400 h14 M966 364 l3.400 3.400 l-3.400 3.400" stroke="#2b88d8" stroke-width="1.300"/></g>
 <g transform="translate(59.6 0)"><path d="M952.600 354 h-2.800 v17.800 h3.400 M961.400 354 h2.800 v6" stroke="#e8912d" stroke-width="1.500"/>
 <path d="M953.4 355.4 v-3 h2.4 a1.9 1.9 0 0 1 3.8 0 h2.4 v3z" stroke="#605e5c" stroke-width="1" fill="#fff"/>
 <rect x="955.5" y="361.5" width="13" height="11" stroke="#3b3a39" stroke-width="1.1" fill="#fff"/>
 <path d="M956 371.6 l3.6 -4.4 l2.6 2.6 l2 -2 l3.8 3.8z" fill="#2b88d8"/><circle cx="965.4" cy="364.4" r="1" fill="#2b88d8"/></g>
 <g transform="translate(89 0)"><path d="M952.600 354 h-2.800 v17.800 h6 M961.400 354 h2.800 v5" stroke="#e8912d" stroke-width="1.500"/>
 <path d="M953.4 355.4 v-3 h2.4 a1.9 1.9 0 0 1 3.8 0 h2.4 v3z" stroke="#605e5c" stroke-width="1" fill="#fff"/></g>
 <!-- group icons -->
 <g id="gi" stroke="#3b3a39" stroke-width="1.1">
  <rect x="925.5" y="389.5" width="8" height="8" fill="none"/><rect x="929.5" y="393" width="7.5" height="7.500" fill="none"/>
  <g fill="#3b3a39" stroke="none"><rect x="922" y="387" width="1.600" height="1.600"/><rect x="936.800" y="387" width="1.600" height="1.600"/><rect x="922" y="402.400" width="1.600" height="1.600"/><rect x="936.800" y="402.400" width="1.600" height="1.600"/>
  <rect x="926" y="387.200" width="2.400" height="1"/><rect x="932" y="387.200" width="2.400" height="1"/><rect x="926" y="402.800" width="2.400" height="1"/><rect x="932" y="402.800" width="2.400" height="1"/>
  <rect x="922.200" y="391" width="1" height="2.400"/><rect x="922.200" y="397" width="1" height="2.400"/><rect x="937.200" y="391" width="1" height="2.400"/><rect x="937.200" y="397" width="1" height="2.400"/></g>
 </g>
 <g transform="translate(183 2.400)" stroke="#3b3a39" stroke-width="1.1">
  <rect x="925.5" y="389.5" width="8" height="8" fill="none"/><rect x="929.5" y="393" width="7.500" height="7.500" fill="none"/>
  <g fill="#3b3a39" stroke="none"><rect x="922" y="387" width="1.600" height="1.600"/><rect x="936.800" y="387" width="1.600" height="1.600"/><rect x="922" y="402.400" width="1.600" height="1.600"/><rect x="936.800" y="402.400" width="1.600" height="1.600"/>
  <rect x="926" y="387.200" width="2.400" height="1"/><rect x="932" y="387.200" width="2.400" height="1"/><rect x="926" y="402.800" width="2.400" height="1"/><rect x="932" y="402.800" width="2.400" height="1"/>
  <rect x="922.200" y="391" width="1" height="2.400"/><rect x="922.200" y="397" width="1" height="2.400"/><rect x="937.200" y="391" width="1" height="2.400"/><rect x="937.200" y="397" width="1" height="2.400"/></g>
 </g>
 <g transform="translate(183 33)" stroke="#c8c6c4" stroke-width="1.1">
  <rect x="924.5" y="389.5" width="5.6" height="5.6" fill="#fff"/><rect x="930.5" y="395.500" width="6" height="6" fill="#fff"/>
  <path d="M922.5 391 v-3.5 h3.5 M934.5 387.5 h3.5 v3.5 M938 400 v3.5 h-3.5 M926 403.5 h-3.500 v-3.5" stroke-width="1" stroke-dasharray="1.5 1.5"/>
 </g>
 <!-- bring to front / send to back -->
 <path d="M926.6 420 v-3.4 h-4 v4 h2 M934.4 431.600 h3.400 v-4 h-1.6" stroke="#3b3a39" stroke-width="1.1"/>
 <rect x="925.5" y="419.5" width="10" height="10" fill="#fbd48a" stroke="#e8912d" stroke-width="1.2"/>
 <rect x="922.5" y="444.500" width="5.6" height="5.6" stroke="#3b3a39" stroke-width="1.1" fill="#fff"/><rect x="931.5" y="453.5" width="5.600" height="5.600" stroke="#3b3a39" stroke-width="1.1" fill="#fff"/>
 <path d="M931 446.500 h4 v4.500 M929 456.500 h-4 v-4" stroke="#e8912d" stroke-width="1.2"/>
 <!-- link -->
 <rect x="922.8" y="478.400" width="9.600" height="6.400" rx="3.200" stroke="#c8c6c4" stroke-width="1.200"/>
 <rect x="928" y="480.600" width="9.600" height="6.400" rx="3.200" stroke="#c8c6c4" stroke-width="1.200"/>
 <!-- insert caption -->
 <rect x="922.5" y="536.500" width="15" height="10.500" stroke="#3b3a39" stroke-width="1.1" fill="#fff"/>
 <path d="M923 546.500 l4.400 -5.400 l3.400 3.400 l2 -1.800 l4.200 3.800z" fill="#2b88d8"/><circle cx="934.400" cy="539.400" r="1" fill="#e8912d"/>
 <path d="M922.500 550.500 h5 M929.500 550.500 h8" stroke="#e81123" stroke-width="1.100"/>
 <!-- wrap text -->
 <path d="M922 566.400 h16 M922 570.400 h3.600 M934.600 570.400 h3.400 M922 574.400 h2.600 M935.600 574.400 h2.400 M922 578.400 h16" stroke="#2b88d8" stroke-width="1.100"/>
 <path d="M926 574.800 a4 4 0 0 1 8 0 h-2.400 a1.600 1.600 0 0 0 -3.200 0z" fill="#3b3a39"/>
 <!-- edit alt text -->
 <path d="M937.500 602 v-5.500 h-15 v12 h6" stroke="#3b3a39" stroke-width="1.100"/><path d="M923 607 l3.800 -4.600 l3 2.800" stroke="#3b3a39" stroke-width="1"/><circle cx="934" cy="599.600" r=".9" fill="#3b3a39"/>
 <rect x="930.500" y="604.500" width="7.500" height="5" stroke="#2b88d8" stroke-width="1.100" fill="#fff"/><path d="M932.500 607 h3.500" stroke="#2b88d8" stroke-width="1"/>
 <!-- more layout -->
 <path d="M922 623.500 h16 M922 635.500 h16 M922 638.500 h16 M922 627 h2.500 M922 629.500 h2.500 M922 632 h2.500" stroke="#3b3a39" stroke-width="1"/>
 <rect x="926.500" y="626" width="10.500" height="7" stroke="#2b88d8" stroke-width="1.100" fill="#fff"/>
 <g fill="#252423"><rect x="925.700" y="625.200" width="1.600" height="1.600"/><rect x="936.200" y="625.200" width="1.600" height="1.600"/><rect x="925.700" y="632.200" width="1.600" height="1.600"/><rect x="936.200" y="632.200" width="1.600" height="1.600"/></g>
 <!-- format object -->
 <path d="M923.400 655.600 l3.400 -3.400 l4.400 4.400 l-3.400 3.400z" stroke="#3b3a39" stroke-width="1.100"/>
 <path d="M937.600 655.400 l1.400 1.400 l-6.400 6.600 l-2.200 .8 l.6 -2.400z" fill="#fff" stroke="#3b3a39" stroke-width="1"/>
 <path d="M930.600 663.400 c-.4 2.200 -1.800 3.400 -4.200 3.800 c1.400 -1 1.200 -2.400 1.800 -3.400 c.7 -1 1.900 -1.100 2.400 -.4z" fill="#2b88d8"/>
 <!-- annotation arrow 2 -->
 <path d="M1183.800 327.600 L1165.200 372" stroke="#000" stroke-width="3"/>
 <path d="M1161.400 381 L1162.400 365 L1165.800 369.200 L1171.200 368.600 Z" fill="#000" stroke="#000" stroke-width="1"/>
 <!-- mouse cursor -->
 <path d="M1197.500 411 v16.500 l3.800 -3.600 l2.600 6 l2.400 -1 l-2.600 -6 h5.200z" fill="#fff" stroke="#000" stroke-width="1"/>
</svg>

<div class="a" style="left:0;top:705px;width:1251px;height:23px;background:#f3f2f1;border-top:1px solid #c8c6c4;box-sizing:border-box;"></div>
<div class="a" style="left:979px;top:705px;width:39px;height:22px;background:#c8c6c4;"></div>
<span class="t" style="left:9px;top:704px;font-size:11.6px;color:#444;letter-spacing:-0.231px;">Page 1 of 2</span><span class="t" style="left:85px;top:704px;font-size:11.6px;color:#444;letter-spacing:-0.078px;">30 words</span><span class="t" style="left:204px;top:704px;font-size:11.6px;color:#444;letter-spacing:-0.126px;">Accessibility: Investigate</span><span class="t" style="left:897px;top:704px;font-size:11.6px;color:#444;letter-spacing:-0.395px;">Focus</span><span class="t" style="left:1203.9px;top:704px;font-size:11.6px;color:#444;letter-spacing:-1.052px;">260%</span>
<svg width="1251" height="728" viewBox="0 0 1251 728" fill="none" stroke="#444" stroke-width="1">
 <path d="M151.500 710.500 h4.600 l1.700 1.400 l1.700 -1.400 h4.600 v7 M151.500 710.500 v10 h4.600 l1.700 1.400 M157.800 712 v9.500"/><path d="M159.600 718.800 l2 2 l3.200 -3.800" stroke-width="1.100"/>
 <circle cx="192.700" cy="711" r="1.700"/><path d="M187 714.500 c3.600 1 7.600 1 11.400 0 M191 715.200 v3 l-2.600 4.600 M194.400 715.200 v3 l1 1.600"/><path d="M194.800 718.200 l4.600 4.600 M199.400 718.200 l-4.600 4.600" stroke-width="1.100"/>
 <path d="M880.500 713 v-3.500 h3.500 M890 709.500 h3.500 v3.500 M893.500 718 v3.500 h-3.500 M884 721.500 h-3.500 v-3.500"/><path d="M884.500 713.500 h5 M884.500 715.500 h5 M884.500 717.500 h5" stroke-width=".8"/>
 <path d="M958.200 710.500 v10 M952 709.500 h5 l1.200 1 l1.200 -1 h5.100 v11 h-5.100 l-1.200 1 l-1.200 -1 h-5z"/><path d="M953.500 712.500 h3 M953.500 714.500 h3 M953.500 716.500 h3 M960 712.500 h3 M960 714.500 h3 M960 716.500 h3" stroke-width=".8"/>
 <rect x="992.500" y="709.500" width="12" height="13" fill="#fff" stroke="#252423"/><path d="M994.500 712.500 h8 M994.500 714.500 h8 M994.500 716.500 h8 M994.500 718.500 h8" stroke="#252423" stroke-width=".9"/>
 <rect x="1032.500" y="709.500" width="11" height="12"/><path d="M1034.500 712.500 h7 M1034.500 714.500 h7 M1034.500 716.500 h3"/><circle cx="1041.600" cy="719" r="4.200" fill="#f3f2f1"/><path d="M1037.400 719 h8.400 M1041.600 714.800 v8.400" stroke-width=".8"/><ellipse cx="1041.600" cy="719" rx="2" ry="4.200" stroke-width=".8"/>
 <path d="M1065.500 716.500 h7 M1078 716.500 h100.500 M1128.500 714 v5 M1182 716.500 h9 M1186.500 712 v9"/>
 <rect x="1145.500" y="710.500" width="4" height="12" fill="#444" stroke="none"/>
</svg>
<div class="a" style="left:0;top:35px;width:1px;height:693px;background:#2b579a;"></div>
<div class="a" style="left:0;top:727px;width:1251px;height:1px;background:#2b579a;"></div>
<div class="a" style="left:1250px;top:35px;width:1px;height:693px;background:#2b579a;"></div>
</body></html>
